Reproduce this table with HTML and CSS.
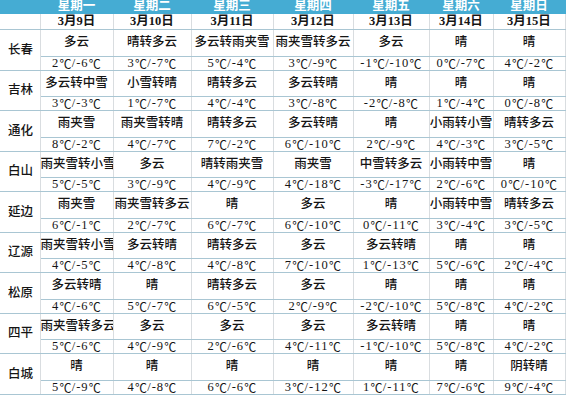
FILE: index.html
```html
<!DOCTYPE html>
<html lang="zh">
<head>
<meta charset="utf-8">
<link rel="stylesheet" href="styles.css">
</head>
<body>
<table class="weather">
  <colgroup>
    <col class="c-city"><col class="c1"><col class="c2"><col class="c3"><col class="c4"><col class="c5"><col class="c6"><col class="c7">
  </colgroup>
  <thead>
    <tr class="week">
      <th></th><th>星期一</th><th>星期二</th><th>星期三</th><th>星期四</th><th>星期五</th><th>星期六</th><th>星期日</th>
    </tr>
    <tr class="date">
      <td></td><td>3月9日</td><td>3月10日</td><td>3月11日</td><td>3月12日</td><td>3月13日</td><td>3月14日</td><td>3月15日</td>
    </tr>
  </thead>
  <tbody>
    <tr class="wx"><td class="city" rowspan="2">长春</td><td>多云</td><td>晴转多云</td><td>多云转雨夹雪</td><td>雨夹雪转多云</td><td>多云</td><td>晴</td><td>晴</td></tr>
    <tr class="tp"><td>2<span class="u">℃</span>/-6<span class="u">℃</span></td><td>3<span class="u">℃</span>/-7<span class="u">℃</span></td><td>5<span class="u">℃</span>/-4<span class="u">℃</span></td><td>3<span class="u">℃</span>/-9<span class="u">℃</span></td><td>-1<span class="u">℃</span>/-10<span class="u">℃</span></td><td>0<span class="u">℃</span>/-7<span class="u">℃</span></td><td>4<span class="u">℃</span>/-2<span class="u">℃</span></td></tr>

    <tr class="wx"><td class="city" rowspan="2">吉林</td><td>多云转中雪</td><td>小雪转晴</td><td>晴转多云</td><td>多云转晴</td><td>晴</td><td>晴</td><td>晴</td></tr>
    <tr class="tp"><td>3<span class="u">℃</span>/-3<span class="u">℃</span></td><td>1<span class="u">℃</span>/-7<span class="u">℃</span></td><td>4<span class="u">℃</span>/-4<span class="u">℃</span></td><td>3<span class="u">℃</span>/-8<span class="u">℃</span></td><td>-2<span class="u">℃</span>/-8<span class="u">℃</span></td><td>1<span class="u">℃</span>/-4<span class="u">℃</span></td><td>0<span class="u">℃</span>/-8<span class="u">℃</span></td></tr>

    <tr class="wx"><td class="city" rowspan="2">通化</td><td>雨夹雪</td><td>雨夹雪转晴</td><td>晴转多云</td><td>多云转晴</td><td>晴</td><td>小雨转小雪</td><td>晴转多云</td></tr>
    <tr class="tp"><td>8<span class="u">℃</span>/-2<span class="u">℃</span></td><td>4<span class="u">℃</span>/-7<span class="u">℃</span></td><td>7<span class="u">℃</span>/-2<span class="u">℃</span></td><td>6<span class="u">℃</span>/-10<span class="u">℃</span></td><td>2<span class="u">℃</span>/-9<span class="u">℃</span></td><td>4<span class="u">℃</span>/-3<span class="u">℃</span></td><td>3<span class="u">℃</span>/-5<span class="u">℃</span></td></tr>

    <tr class="wx"><td class="city" rowspan="2">白山</td><td>雨夹雪转小雪</td><td>多云</td><td>晴转雨夹雪</td><td>雨夹雪</td><td>中雪转多云</td><td>小雨转中雪</td><td>晴</td></tr>
    <tr class="tp"><td>5<span class="u">℃</span>/-5<span class="u">℃</span></td><td>3<span class="u">℃</span>/-9<span class="u">℃</span></td><td>4<span class="u">℃</span>/-9<span class="u">℃</span></td><td>4<span class="u">℃</span>/-18<span class="u">℃</span></td><td>-3<span class="u">℃</span>/-17<span class="u">℃</span></td><td>2<span class="u">℃</span>/-6<span class="u">℃</span></td><td>0<span class="u">℃</span>/-10<span class="u">℃</span></td></tr>

    <tr class="wx"><td class="city" rowspan="2">延边</td><td>雨夹雪</td><td>雨夹雪转多云</td><td>晴</td><td>多云</td><td>晴</td><td>小雨转中雪</td><td>晴转多云</td></tr>
    <tr class="tp"><td>6<span class="u">℃</span>/-1<span class="u">℃</span></td><td>2<span class="u">℃</span>/-7<span class="u">℃</span></td><td>6<span class="u">℃</span>/-7<span class="u">℃</span></td><td>6<span class="u">℃</span>/-10<span class="u">℃</span></td><td>0<span class="u">℃</span>/-11<span class="u">℃</span></td><td>3<span class="u">℃</span>/-4<span class="u">℃</span></td><td>3<span class="u">℃</span>/-5<span class="u">℃</span></td></tr>

    <tr class="wx"><td class="city" rowspan="2">辽源</td><td>雨夹雪转小雪</td><td>多云转晴</td><td>晴转多云</td><td>多云</td><td>多云转晴</td><td>晴</td><td>晴</td></tr>
    <tr class="tp"><td>4<span class="u">℃</span>/-5<span class="u">℃</span></td><td>4<span class="u">℃</span>/-8<span class="u">℃</span></td><td>4<span class="u">℃</span>/-8<span class="u">℃</span></td><td>7<span class="u">℃</span>/-10<span class="u">℃</span></td><td>1<span class="u">℃</span>/-13<span class="u">℃</span></td><td>5<span class="u">℃</span>/-6<span class="u">℃</span></td><td>2<span class="u">℃</span>/-4<span class="u">℃</span></td></tr>

    <tr class="wx"><td class="city" rowspan="2">松原</td><td>多云转晴</td><td>晴</td><td>晴转多云</td><td>多云</td><td>晴</td><td>晴</td><td>晴</td></tr>
    <tr class="tp"><td>4<span class="u">℃</span>/-6<span class="u">℃</span></td><td>5<span class="u">℃</span>/-7<span class="u">℃</span></td><td>6<span class="u">℃</span>/-5<span class="u">℃</span></td><td>2<span class="u">℃</span>/-9<span class="u">℃</span></td><td>-2<span class="u">℃</span>/-10<span class="u">℃</span></td><td>5<span class="u">℃</span>/-8<span class="u">℃</span></td><td>4<span class="u">℃</span>/-2<span class="u">℃</span></td></tr>

    <tr class="wx"><td class="city" rowspan="2">四平</td><td>雨夹雪转多云</td><td>多云</td><td>多云</td><td>多云</td><td>多云转晴</td><td>晴</td><td>晴</td></tr>
    <tr class="tp"><td>5<span class="u">℃</span>/-6<span class="u">℃</span></td><td>4<span class="u">℃</span>/-9<span class="u">℃</span></td><td>2<span class="u">℃</span>/-6<span class="u">℃</span></td><td>4<span class="u">℃</span>/-11<span class="u">℃</span></td><td>-1<span class="u">℃</span>/-10<span class="u">℃</span></td><td>5<span class="u">℃</span>/-8<span class="u">℃</span></td><td>4<span class="u">℃</span>/-2<span class="u">℃</span></td></tr>

    <tr class="wx"><td class="city" rowspan="2">白城</td><td>晴</td><td>晴</td><td>晴</td><td>晴</td><td>晴</td><td>晴</td><td>阴转晴</td></tr>
    <tr class="tp"><td>5<span class="u">℃</span>/-9<span class="u">℃</span></td><td>4<span class="u">℃</span>/-8<span class="u">℃</span></td><td>6<span class="u">℃</span>/-6<span class="u">℃</span></td><td>3<span class="u">℃</span>/-12<span class="u">℃</span></td><td>1<span class="u">℃</span>/-11<span class="u">℃</span></td><td>7<span class="u">℃</span>/-6<span class="u">℃</span></td><td>9<span class="u">℃</span>/-4<span class="u">℃</span></td></tr>
  </tbody>
</table>
</body>
</html>
```

FILE: styles.css
```css
html, body {
  margin: 0;
  padding: 0;
  background: #ffffff;
}

.weather {
  margin-top: -6px;
  width: 565px;
  table-layout: fixed;
  border-collapse: collapse;
  font-family: "Liberation Serif", "Noto Sans CJK SC", serif;
  font-size: 12.5px;
  color: #151515;
}

.c-city { width: 40px; }
.c1 { width: 73px; }
.c2 { width: 78px; }
.c3 { width: 82px; }
.c4 { width: 80px; }
.c5 { width: 76px; }
.c6 { width: 64px; }
.c7 { width: 72px; }

.weather th,
.weather td {
  padding: 0;
  text-align: center;
  vertical-align: middle;
  white-space: nowrap;
  overflow: hidden;
  line-height: 13px;
  border-left: 1px solid #d9dde0;
  border-right: 1px solid #d9dde0;
}

.weather th:first-child,
.weather td:first-child {
  border-left: none;
}

.week th {
  height: 17px;
  background: #45acd3;
  color: #ffffff;
  font-family: "Noto Sans CJK SC", sans-serif;
  font-weight: 700;
  font-size: 12.5px;
  line-height: 12px;
  vertical-align: bottom;
  padding-bottom: 3px;
  border-left-color: #45acd3;
  border-right-color: #45acd3;
}

.date td {
  height: 15px;
  font-weight: 600;
  border-bottom: 1px solid #a9c6d3;
}

.wx td {
  height: 25.5px;
  font-weight: 500;
  border-bottom: 1px solid #a9c6d3;
}

.tp td {
  height: 13px;
  letter-spacing: 1px;
  border-bottom: 1px solid #a9c6d3;
}

.u {
  display: inline-block;
  width: 12.5px;
  vertical-align: top;
  text-align: center;
  letter-spacing: 0;
  font-family: "Noto Sans CJK SC", sans-serif;
  font-size: 12px;
  line-height: 13px;
}

.weather td.city {
  font-family: "Noto Sans CJK SC", sans-serif;
  font-weight: 500;
  text-align: left;
  padding-left: 8px;
  padding-bottom: 3px;
  border-bottom: 1px solid #a9c6d3;
}
```
